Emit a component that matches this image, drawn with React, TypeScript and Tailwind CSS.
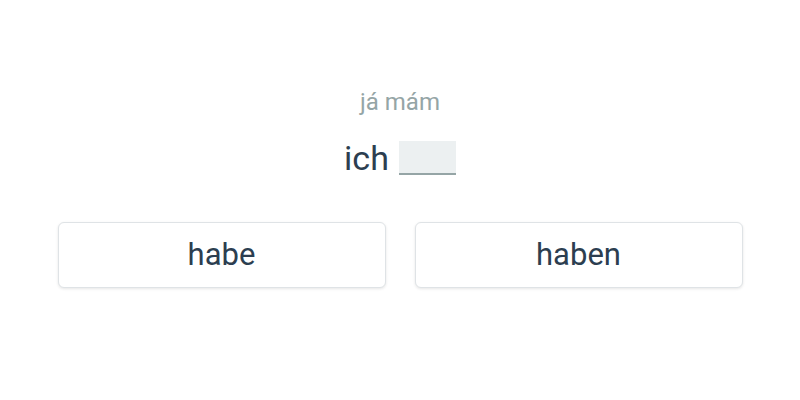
export default function App() {
  return (
    <div
      className="w-[800px] h-[400px] bg-white flex flex-col items-center"
      style={{ fontFamily: "Roboto, 'Liberation Sans', sans-serif" }}
    >
      <div className="mt-[88px] text-[24px] leading-[28px] text-[#95a5a6]">já mám</div>
      <div className="mt-[24px] flex items-end gap-[9px] h-[36px]">
        <span className="text-[34px] leading-[36px] text-[#2c3e50]">ich</span>
        <span className="w-[57px] h-[34px] bg-[#ecf0f1] border-b-2 border-[#95a5a6] mb-[1px] ml-[1px]" />
      </div>
      <div className="mt-[46px] flex gap-[29px]">
        <button className="w-[328px] h-[66px] rounded-[6px] border border-[#dfe3e6] bg-white shadow-[0_1px_3px_rgba(0,0,0,0.1)] text-[31px] text-[#2c3e50]">
          habe
        </button>
        <button className="w-[328px] h-[66px] rounded-[6px] border border-[#dfe3e6] bg-white shadow-[0_1px_3px_rgba(0,0,0,0.1)] text-[31px] text-[#2c3e50]">
          haben
        </button>
      </div>
    </div>
  );
}
